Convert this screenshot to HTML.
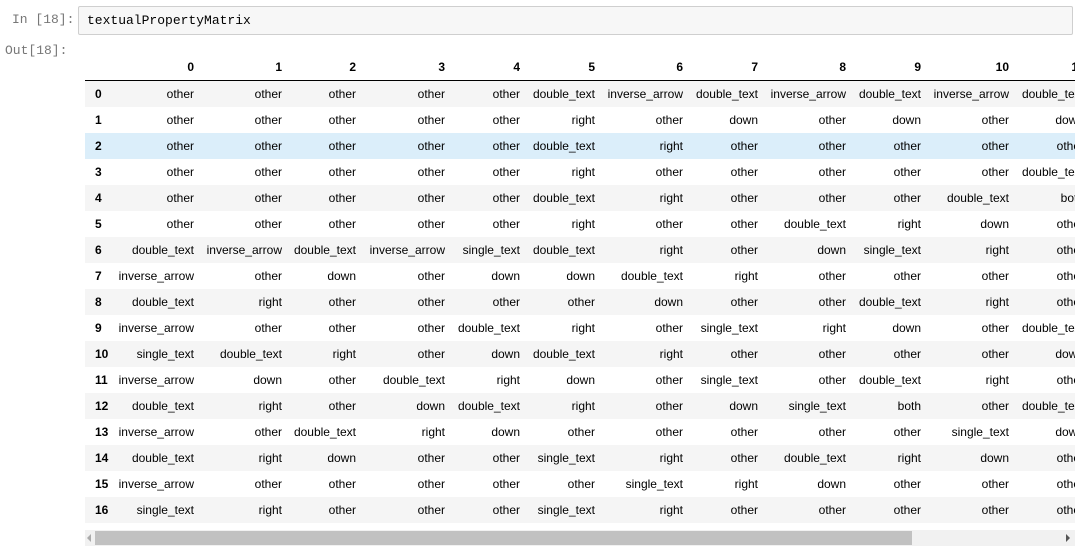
<!DOCTYPE html>
<html><head><meta charset="utf-8"><style>
body{margin:0;background:#fff;width:1084px;height:550px;overflow:hidden;position:relative;font-family:"Liberation Sans",Arial,sans-serif}
.p{position:absolute;font-family:"Liberation Mono",monospace;font-size:13px;color:#777}
.inbox{position:absolute;left:78px;top:6px;width:995px;height:29px;background:#f7f7f7;border:1px solid #cfcfcf;border-radius:2px;box-sizing:border-box}
.inbox span{position:absolute;left:8px;top:6px;font-family:"Liberation Mono",monospace;font-size:13px;color:#000}
.wrap{position:absolute;left:85px;top:54px;width:990px;height:470px;overflow:hidden}
table{border-collapse:collapse;table-layout:fixed;font-size:12px;color:#000;width:1004px;min-width:1004px}
th,td{padding:0 5px 0 0;text-align:right;white-space:nowrap;overflow:visible;height:26px;line-height:26px}
thead th{height:26px;border-bottom:1px solid #000;font-weight:bold}
tbody th{text-align:left;padding-left:10px;font-weight:bold}
tbody tr:nth-child(odd){background:#f5f5f5}
tbody tr.h{background:#dbeefa}
.sb{position:absolute;left:85px;top:530px;width:990px;height:16px;background:#f1f1f1}
.th{position:absolute;left:95px;top:531px;width:817px;height:14px;background:#c1c1c1}
</style></head><body>
<div class="p" style="left:12px;top:12px">In [18]:</div>
<div class="inbox"><span>textualPropertyMatrix</span></div>
<div class="p" style="left:5px;top:43px">Out[18]:</div>
<div class="wrap"><table>
<colgroup><col style="width:29px"><col style="width:85px"><col style="width:88px"><col style="width:74px"><col style="width:89px"><col style="width:75px"><col style="width:75px"><col style="width:88px"><col style="width:75px"><col style="width:88px"><col style="width:75px"><col style="width:88px"><col style="width:75px"></colgroup>
<thead><tr><th></th><th>0</th><th>1</th><th>2</th><th>3</th><th>4</th><th>5</th><th>6</th><th>7</th><th>8</th><th>9</th><th>10</th><th>11</th></tr></thead>
<tbody>
<tr><th>0</th><td>other</td><td>other</td><td>other</td><td>other</td><td>other</td><td>double_text</td><td>inverse_arrow</td><td>double_text</td><td>inverse_arrow</td><td>double_text</td><td>inverse_arrow</td><td>double_text</td></tr>
<tr><th>1</th><td>other</td><td>other</td><td>other</td><td>other</td><td>other</td><td>right</td><td>other</td><td>down</td><td>other</td><td>down</td><td>other</td><td>down</td></tr>
<tr class="h"><th>2</th><td>other</td><td>other</td><td>other</td><td>other</td><td>other</td><td>double_text</td><td>right</td><td>other</td><td>other</td><td>other</td><td>other</td><td>other</td></tr>
<tr><th>3</th><td>other</td><td>other</td><td>other</td><td>other</td><td>other</td><td>right</td><td>other</td><td>other</td><td>other</td><td>other</td><td>other</td><td>double_text</td></tr>
<tr><th>4</th><td>other</td><td>other</td><td>other</td><td>other</td><td>other</td><td>double_text</td><td>right</td><td>other</td><td>other</td><td>other</td><td>double_text</td><td>both</td></tr>
<tr><th>5</th><td>other</td><td>other</td><td>other</td><td>other</td><td>other</td><td>right</td><td>other</td><td>other</td><td>double_text</td><td>right</td><td>down</td><td>other</td></tr>
<tr><th>6</th><td>double_text</td><td>inverse_arrow</td><td>double_text</td><td>inverse_arrow</td><td>single_text</td><td>double_text</td><td>right</td><td>other</td><td>down</td><td>single_text</td><td>right</td><td>other</td></tr>
<tr><th>7</th><td>inverse_arrow</td><td>other</td><td>down</td><td>other</td><td>down</td><td>down</td><td>double_text</td><td>right</td><td>other</td><td>other</td><td>other</td><td>other</td></tr>
<tr><th>8</th><td>double_text</td><td>right</td><td>other</td><td>other</td><td>other</td><td>other</td><td>down</td><td>other</td><td>other</td><td>double_text</td><td>right</td><td>other</td></tr>
<tr><th>9</th><td>inverse_arrow</td><td>other</td><td>other</td><td>other</td><td>double_text</td><td>right</td><td>other</td><td>single_text</td><td>right</td><td>down</td><td>other</td><td>double_text</td></tr>
<tr><th>10</th><td>single_text</td><td>double_text</td><td>right</td><td>other</td><td>down</td><td>double_text</td><td>right</td><td>other</td><td>other</td><td>other</td><td>other</td><td>down</td></tr>
<tr><th>11</th><td>inverse_arrow</td><td>down</td><td>other</td><td>double_text</td><td>right</td><td>down</td><td>other</td><td>single_text</td><td>other</td><td>double_text</td><td>right</td><td>other</td></tr>
<tr><th>12</th><td>double_text</td><td>right</td><td>other</td><td>down</td><td>double_text</td><td>right</td><td>other</td><td>down</td><td>single_text</td><td>both</td><td>other</td><td>double_text</td></tr>
<tr><th>13</th><td>inverse_arrow</td><td>other</td><td>double_text</td><td>right</td><td>down</td><td>other</td><td>other</td><td>other</td><td>other</td><td>other</td><td>single_text</td><td>down</td></tr>
<tr><th>14</th><td>double_text</td><td>right</td><td>down</td><td>other</td><td>other</td><td>single_text</td><td>right</td><td>other</td><td>double_text</td><td>right</td><td>down</td><td>other</td></tr>
<tr><th>15</th><td>inverse_arrow</td><td>other</td><td>other</td><td>other</td><td>other</td><td>other</td><td>single_text</td><td>right</td><td>down</td><td>other</td><td>other</td><td>other</td></tr>
<tr><th>16</th><td>single_text</td><td>right</td><td>other</td><td>other</td><td>other</td><td>single_text</td><td>right</td><td>other</td><td>other</td><td>other</td><td>other</td><td>other</td></tr>
</tbody></table></div>
<div class="sb"></div><div class="th"></div>
<div style="position:absolute;left:87px;top:534px;width:0;height:0;border-top:4px solid transparent;border-bottom:4px solid transparent;border-right:4px solid #aaa"></div>
<div style="position:absolute;left:1066px;top:534px;width:0;height:0;border-top:4px solid transparent;border-bottom:4px solid transparent;border-left:4px solid #555"></div>
</body></html>
